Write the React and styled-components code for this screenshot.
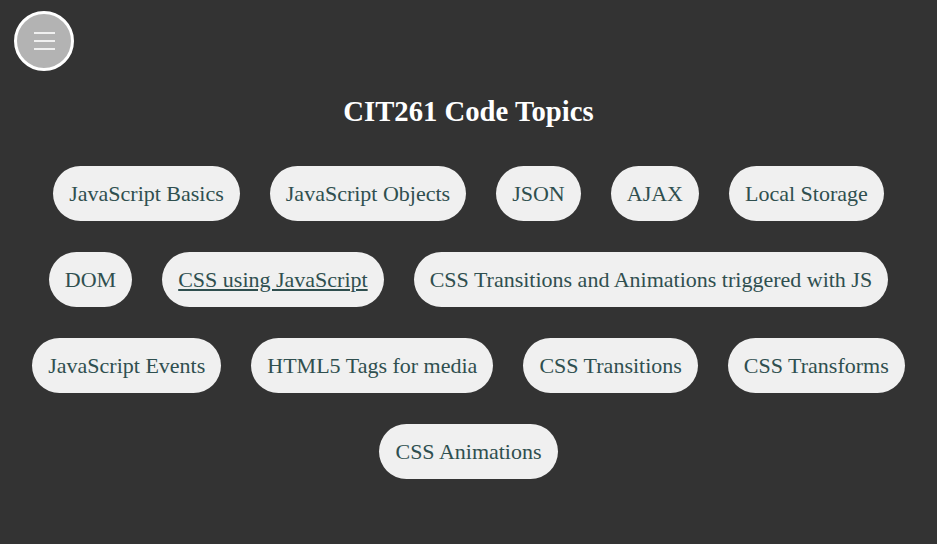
import styled, { createGlobalStyle } from "styled-components";

const GlobalStyle = createGlobalStyle`
  body {
    margin: 0;
    background-color: #333333;
    font-family: "Liberation Serif", "Times New Roman", serif;
  }
`;

const Page = styled.div`
  min-height: 544px;
`;

const Header = styled.header`
  padding: 11px 14px 0;
`;

const MenuButton = styled.button`
  width: 60px;
  height: 60px;
  border-radius: 50%;
  border: 3px solid #ffffff;
  background-color: #b3b3b3;
  display: flex;
  flex-direction: column;
  align-items: center;
  justify-content: center;
  gap: 6px;
  padding: 0;
  cursor: pointer;
`;

const MenuLine = styled.span`
  display: block;
  width: 21px;
  height: 2px;
  background-color: #f0f0f0;
`;

const Title = styled.h1`
  margin: 24px 0 0;
  text-align: center;
  color: #ffffff;
  font-size: 28.7px;
  line-height: 32px;
  font-weight: bold;
`;

const TopicList = styled.nav`
  display: flex;
  flex-wrap: wrap;
  justify-content: center;
  gap: 31px 30px;
  padding: 39px 13px 0;
`;

const Topic = styled.a`
  display: block;
  padding: 15px 16px;
  line-height: 25px;
  font-size: 22px;
  color: #2f4f4f;
  background-color: #f0f0f0;
  border-radius: 28px;
  text-decoration: ${(p) => (p.$active ? "underline" : "none")};
  white-space: nowrap;
`;

const topics = [
  "JavaScript Basics",
  "JavaScript Objects",
  "JSON",
  "AJAX",
  "Local Storage",
  "DOM",
  "CSS using JavaScript",
  "CSS Transitions and Animations triggered with JS",
  "JavaScript Events",
  "HTML5 Tags for media",
  "CSS Transitions",
  "CSS Transforms",
  "CSS Animations",
];

export default function App() {
  return (
    <Page>
      <GlobalStyle />
      <Header>
        <MenuButton aria-label="Menu">
          <MenuLine />
          <MenuLine />
          <MenuLine />
        </MenuButton>
      </Header>
      <Title>CIT261 Code Topics</Title>
      <TopicList>
        {topics.map((t) => (
          <Topic key={t} href="#" $active={t === "CSS using JavaScript"}>
            {t}
          </Topic>
        ))}
      </TopicList>
    </Page>
  );
}
